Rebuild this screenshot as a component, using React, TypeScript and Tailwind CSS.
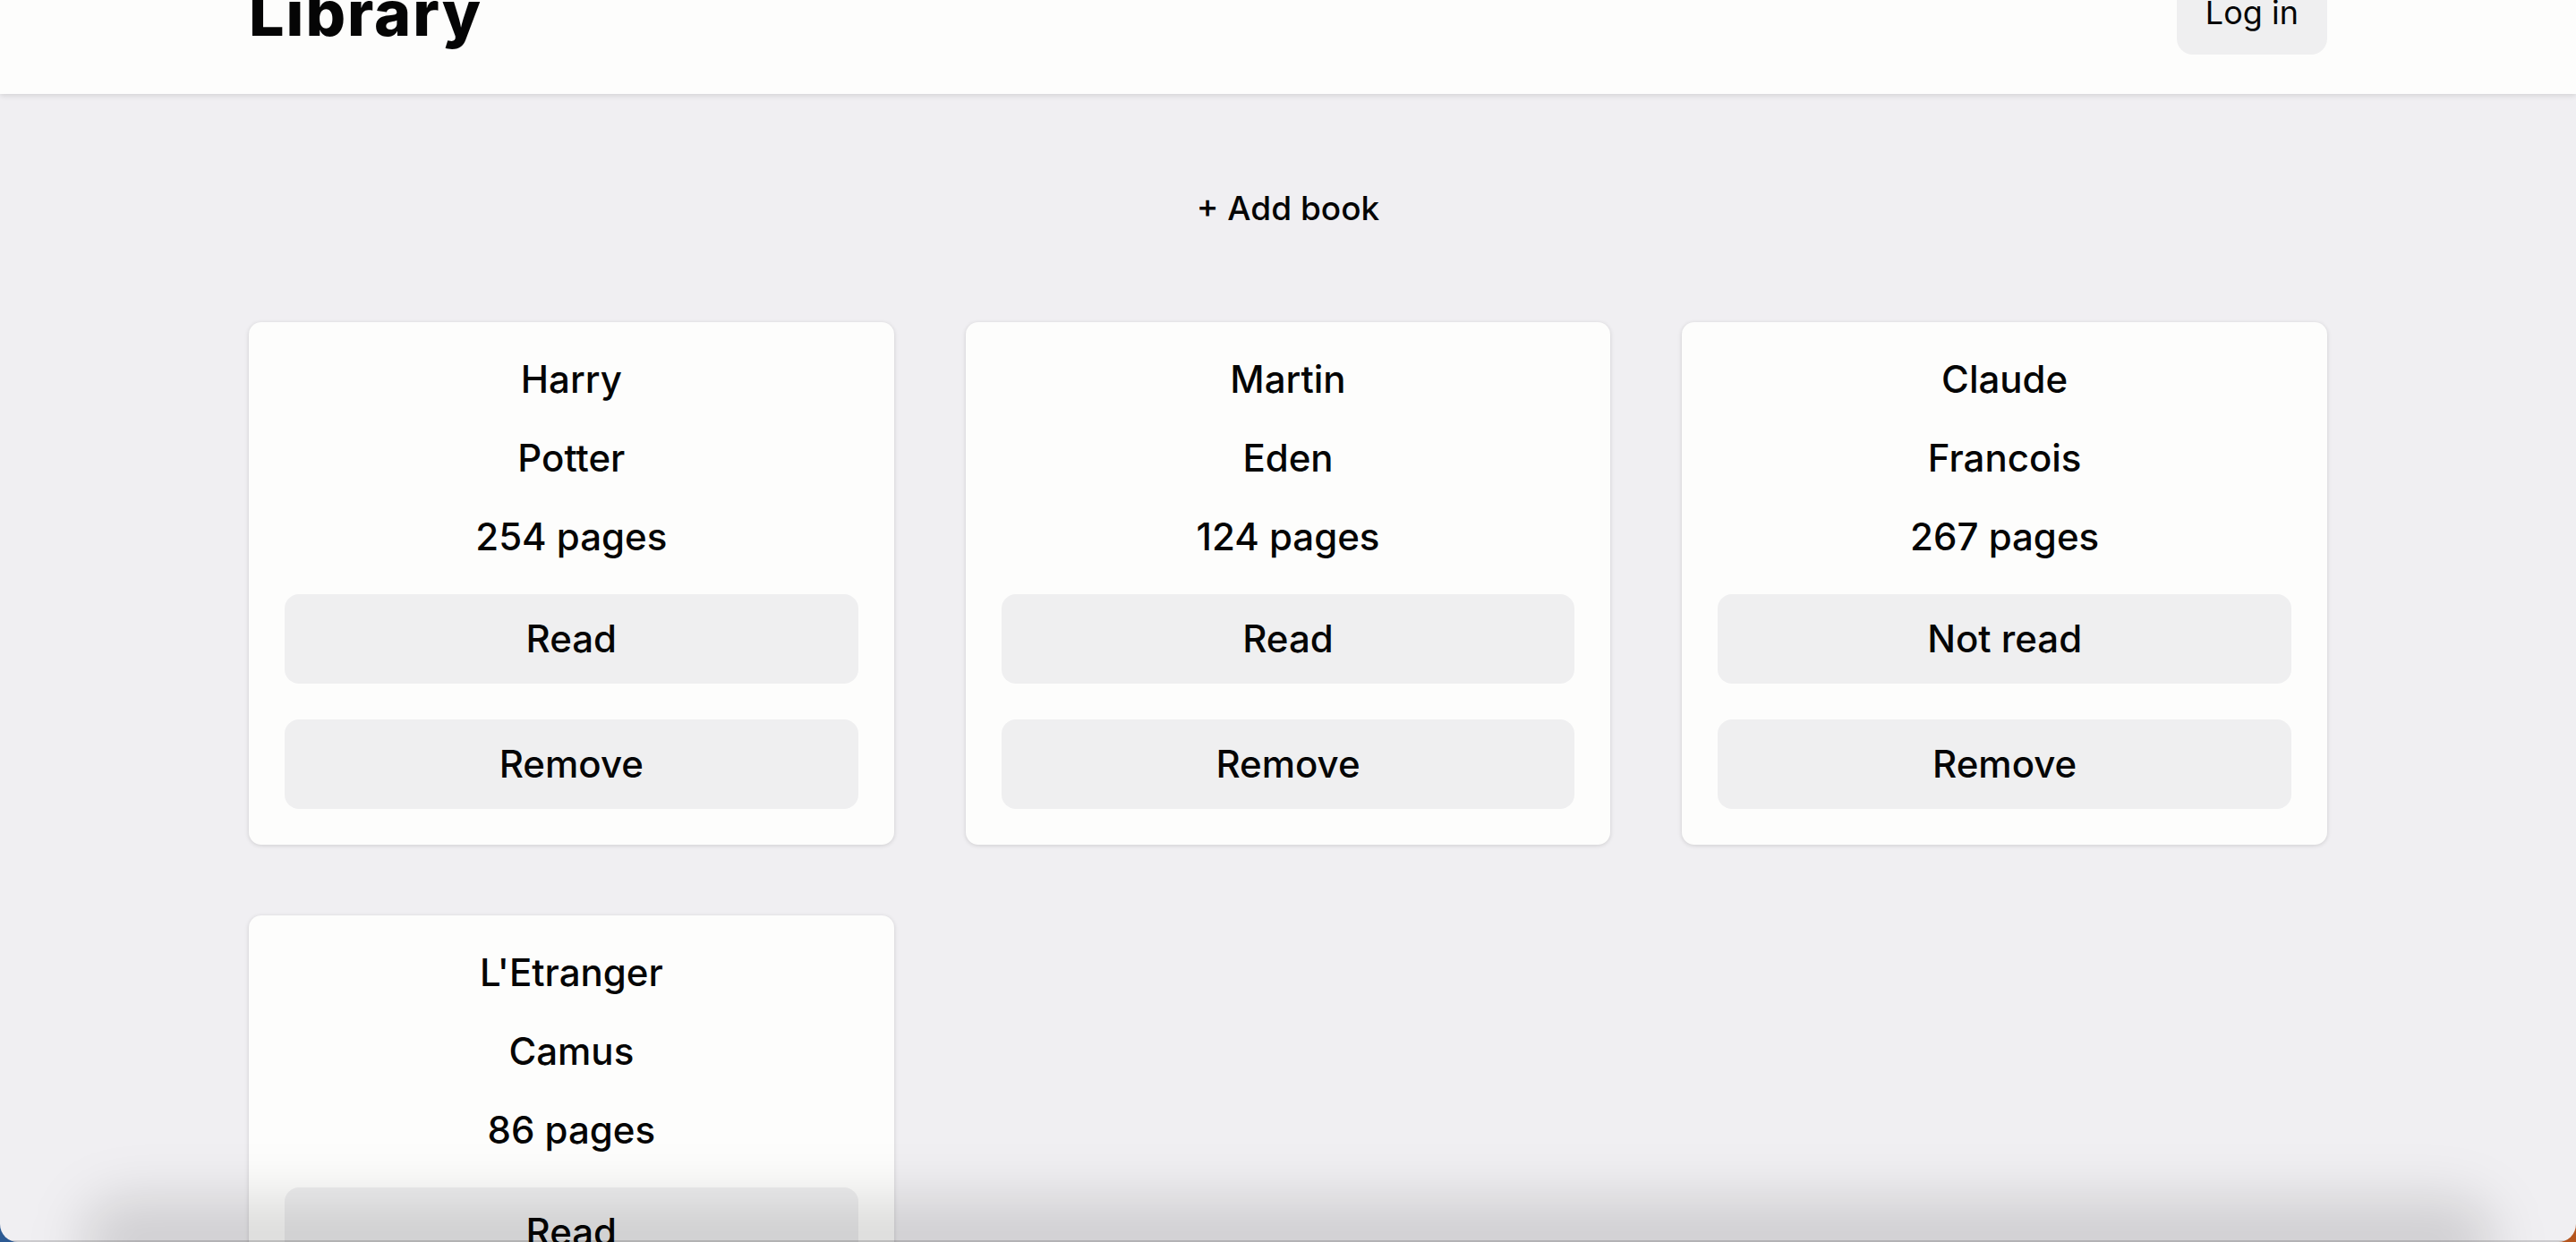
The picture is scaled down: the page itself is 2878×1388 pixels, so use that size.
import React from "react";

const books = [
  { title: "Harry", author: "Potter", pages: 254, read: true },
  { title: "Martin", author: "Eden", pages: 124, read: true },
  { title: "Claude", author: "Francois", pages: 267, read: false },
  { title: "L'Etranger", author: "Camus", pages: 86, read: true },
];

function Card({ b }: { b: (typeof books)[number] }) {
  return (
    <div className="flex flex-col gap-[40px] rounded-[14px] bg-[#fdfdfc] p-[40px] text-center text-[42px] font-medium leading-[48px] text-[#050505] shadow-[0_1px_5px_rgba(0,0,0,0.14)]">
      <p>{b.title}</p>
      <p>{b.author}</p>
      <p>{b.pages} pages</p>
      <button className="h-[100px] w-full rounded-[16px] bg-[#efeff0] font-medium">
        {b.read ? "Read" : "Not read"}
      </button>
      <button className="h-[100px] w-full rounded-[16px] bg-[#efeff0] font-medium">
        Remove
      </button>
    </div>
  );
}

export default function App() {
  return (
    <div
      className="h-[1388px] w-full overflow-hidden bg-[linear-gradient(90deg,#2c5a93_50%,#b5561f_50%)]"
      style={{ fontFamily: "Inter, 'Noto Sans', sans-serif" }}
    >
      <div className="relative h-full overflow-hidden rounded-b-[20px] bg-[#f0eff2]">
        <header className="relative z-10 h-[105px] bg-[#fdfdfc] shadow-[0_2px_6px_rgba(0,0,0,0.12)]">
          <div className="mx-auto flex w-[2322px] items-start justify-between">
            <h1 className="-mt-[20px] text-[70px] font-extrabold leading-[70px] tracking-[2px] text-[#050505]">
              Library
            </h1>
            <button className="-mt-[33px] rounded-[18px] bg-[#efeff0] px-[32px] py-[29px] text-[36px] font-normal leading-[36px] text-[#050505]">
              Log in
            </button>
          </div>
        </header>

        <main className="pt-[104px]">
          <div className="flex justify-center">
            <button className="text-[37px] font-medium leading-[48px] text-[#050505]">
              + Add book
            </button>
          </div>
          <div className="mx-auto mt-[103px] grid w-[2322px] grid-cols-3 gap-x-[80px] gap-y-[79px]">
            {books.map((b) => (
              <Card key={b.title} b={b} />
            ))}
          </div>
        </main>

        <div className="pointer-events-none absolute bottom-[-50px] left-[90px] right-[90px] h-[100px] rounded-full bg-black/[0.13] blur-[30px]" />
        <div className="pointer-events-none absolute bottom-0 left-0 right-0 h-[2px] bg-black/[0.15]" />
      </div>
    </div>
  );
}
